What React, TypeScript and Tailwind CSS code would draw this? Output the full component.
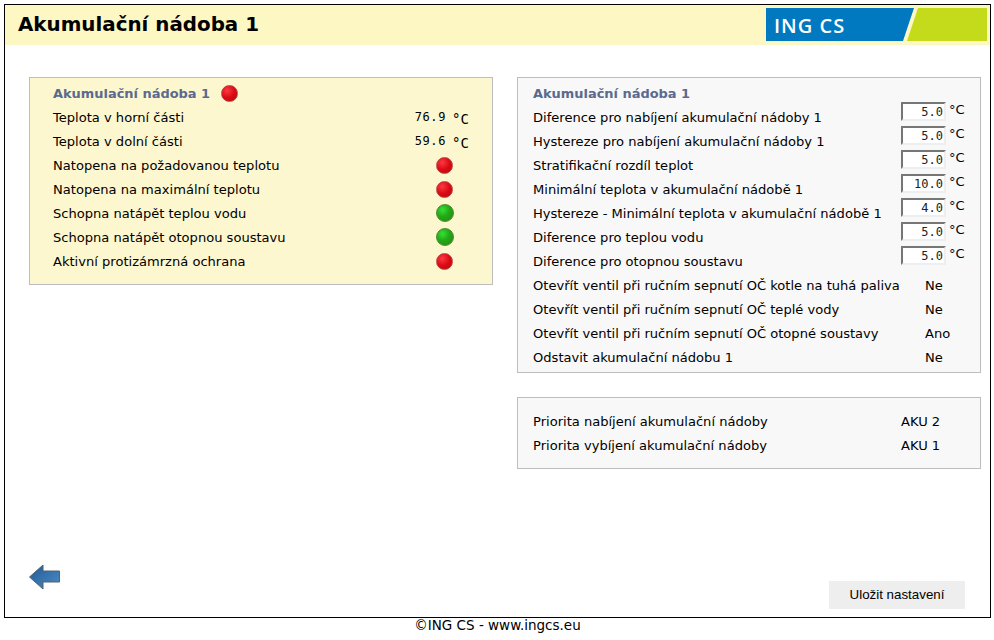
// App.tsx
const leftRows = [
  { label: "Natopena na požadovanou teplotu", on: false },
  { label: "Natopena na maximální teplotu", on: false },
  { label: "Schopna natápět teplou vodu", on: true },
  { label: "Schopna natápět otopnou soustavu", on: true },
  { label: "Aktivní protizámrzná ochrana", on: false },
];

const diffRows = [
  { label: "Diference pro nabíjení akumulační nádoby 1", value: "5.0" },
  { label: "Hystereze pro nabíjení akumulační nádoby 1", value: "5.0" },
  { label: "Stratifikační rozdíl teplot", value: "5.0" },
  { label: "Minimální teplota v akumulační nádobě 1", value: "10.0" },
  { label: "Hystereze - Minimální teplota v akumulační nádobě 1", value: "4.0" },
  { label: "Diference pro teplou vodu", value: "5.0" },
  { label: "Diference pro otopnou soustavu", value: "5.0" },
];

const valveRows = [
  { label: "Otevřít ventil při ručním sepnutí OČ kotle na tuhá paliva", value: "Ne" },
  { label: "Otevřít ventil při ručním sepnutí OČ teplé vody", value: "Ne" },
  { label: "Otevřít ventil při ručním sepnutí OČ otopné soustavy", value: "Ano" },
  { label: "Odstavit akumulační nádobu 1", value: "Ne" },
];

function Dot({ on }: { on: boolean }) {
  return (
    <span
      className={
        on
          ? "block w-[18px] h-[18px] rounded-full border border-[#4a8a30] bg-[radial-gradient(circle_at_35%_30%,#35e035_0%,#22a818_45%,#2a8a08_100%)]"
          : "block w-[17px] h-[17px] rounded-full border border-[#b44] bg-[radial-gradient(circle_at_35%_30%,#fb3a40_0%,#dc0a14_50%,#a80c10_100%)]"
      }
    />
  );
}

function TempRow({ label, value }: { label: string; value: string }) {
  return (
    <div className="flex items-center h-6">
      <span className="w-[361px] pt-[2px]">{label}</span>
      <span className="font-['DejaVu_Sans_Mono',monospace] text-[12px] tracking-[0.6px] w-[32px] text-right">{value}</span>
      <span className="ml-[6px] text-[14px] leading-none pt-[3px] font-['DejaVu_Sans_Mono',monospace]">°C</span>
    </div>
  );
}

function DiffRow({ label, value }: { label: string; value: string }) {
  return (
    <div className="flex items-center h-6">
      <span className="w-[368px] pt-[2px] whitespace-nowrap">{label}</span>
      <div className="flex items-center -translate-y-[6px]">
        <span className="block w-[45px] h-[19px] bg-white border-2 border-t-[#767676] border-l-[#767676] border-r-[#eeeeee] border-b-[#eeeeee] text-right pr-[1px] font-['DejaVu_Sans_Mono',monospace] text-[12px] leading-[16px] text-[#222]">
          {value}
        </span>
        <span className="ml-[3px] -mt-[2px]">°C</span>
      </div>
    </div>
  );
}

function ValueRow({ label, value, labelWidth }: { label: string; value: string; labelWidth: string }) {
  return (
    <div className="flex items-center h-6 pt-[2px]">
      <span className={`${labelWidth} whitespace-nowrap`}>{label}</span>
      <span>{value}</span>
    </div>
  );
}

export default function App() {
  return (
    <div className="w-[994px] h-[640px] bg-white text-black font-['DejaVu_Sans','Verdana',sans-serif] text-[13.07px] pt-1 px-1 overflow-hidden">
      <div className="w-[987px] h-[614px] border border-black flex flex-col">
        {/* header */}
        <header className="h-[40px] bg-[#fdf7c3] flex items-center justify-between pl-[13px] pr-[3px] shrink-0">
          <h1 className="text-[19.85px] font-bold">Akumulační nádoba 1</h1>
          <svg width="221" height="34" viewBox="0 0 221 34" className="block">
            <polygon points="0,0 148,0 137,33 0,33" fill="#0079c1" />
            <polygon points="152,0 221,0 221,33 141,33" fill="#c3db1a" />
            <text x="8" y="25" fill="#fff" fontSize="20" fontFamily="'Open Sans', sans-serif" fontWeight="600" letterSpacing="1">ING CS</text>
          </svg>
        </header>

        {/* panels */}
        <main className="flex-1 flex items-start gap-6 pt-[32px] pl-[24px]">
          <section className="w-[464px] bg-[#fdf7cf] border border-[#bdbdbd] pt-[3px] pb-[11px] pl-[23px]">
            <div className="flex items-center h-6 font-bold text-[#5a6a8e]">
              <span className="pt-[2px] text-[12.95px]">Akumulační nádoba 1</span>
              <span className="ml-[11px]"><Dot on={false} /></span>
            </div>
            <TempRow label="Teplota v horní části" value="76.9" />
            <TempRow label="Teplota v dolní části" value="59.6" />
            {leftRows.map((r) => (
              <div key={r.label} className="flex items-center h-6">
                <span className="w-[383px] pt-[2px]">{r.label}</span>
                <Dot on={r.on} />
              </div>
            ))}
          </section>

          <div className="flex flex-col gap-6 w-[464px]">
            <section className="bg-[#f8f8f8] border border-[#bdbdbd] pt-[3px] pb-[3px] pl-[15px]">
              <div className="flex items-center h-6 pt-[2px] text-[12.95px] font-bold text-[#5a6a8e]">Akumulační nádoba 1</div>
              {diffRows.map((r) => (
                <DiffRow key={r.label} label={r.label} value={r.value} />
              ))}
              {valveRows.map((r) => (
                <ValueRow key={r.label} label={r.label} value={r.value} labelWidth="w-[392px]" />
              ))}
            </section>
            <section className="bg-[#f8f8f8] border border-[#bdbdbd] pt-[11px] pb-[11px] pl-[15px]">
              <ValueRow label="Priorita nabíjení akumulační nádoby" value="AKU 2" labelWidth="w-[368px]" />
              <ValueRow label="Priorita vybíjení akumulační nádoby" value="AKU 1" labelWidth="w-[368px]" />
            </section>
          </div>
        </main>

        {/* bottom */}
        <div className="flex items-start justify-between pl-[24px] pr-[25px] pb-[8px] shrink-0">
          <svg width="32" height="26" viewBox="0 0 32 26" className="block -mt-[12px]">
            <defs>
              <linearGradient id="arrow" x1="0" y1="0" x2="1" y2="1">
                <stop offset="0" stopColor="#1f5a94" />
                <stop offset="1" stopColor="#4f8cc4" />
              </linearGradient>
            </defs>
            <polygon points="0.5,13 14,1 14,7 30.5,7 30.5,18 14,18 14,25" fill="url(#arrow)" stroke="#54606e" strokeWidth="1" />
          </svg>
          <button className="mt-[5px] w-[136px] h-[28px] bg-[#eeeeee] font-['Liberation_Sans',sans-serif] text-[13.33px]">Uložit nastavení</button>
        </div>
      </div>
      <footer className="text-center text-[13.5px] leading-[15px] w-[987px]">©ING CS - www.ingcs.eu</footer>
    </div>
  );
}
